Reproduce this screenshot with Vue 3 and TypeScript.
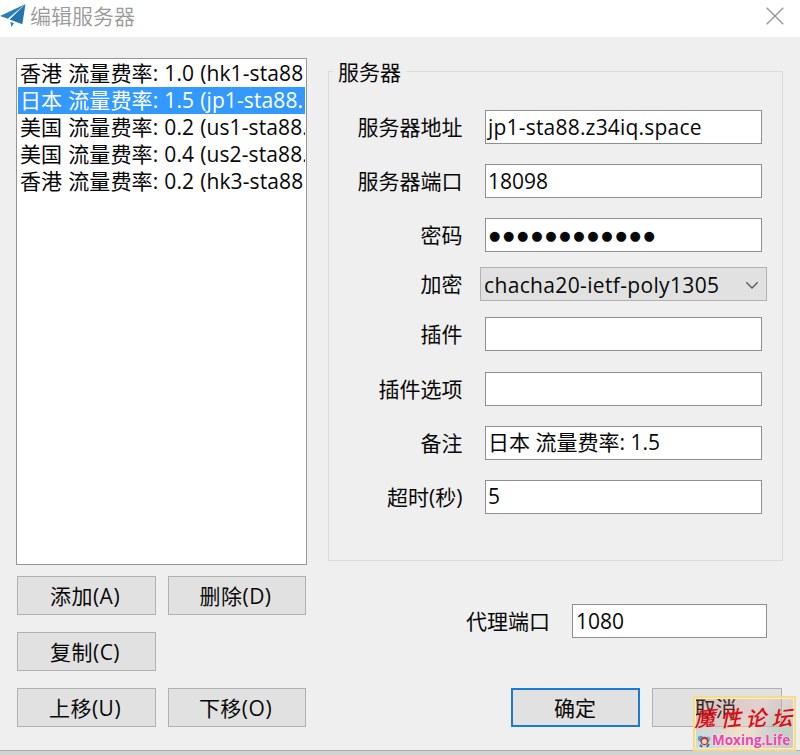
<script setup lang="ts">
import { ref } from 'vue'

interface Field {
  label: string
  value: string
  kind: 'text' | 'password' | 'select'
  tone?: string
}

const servers: string[] = [
  '香港 流量费率: 1.0 (hk1-sta88',
  '日本 流量费率: 1.5 (jp1-sta88.',
  '美国 流量费率: 0.2 (us1-sta88.',
  '美国 流量费率: 0.4 (us2-sta88.',
  '香港 流量费率: 0.2 (hk3-sta88',
]
const selected = ref(1)

const fields: Field[] = [
  { label: '服务器地址', value: 'jp1-sta88.z34iq.space', kind: 'text', tone: 'host' },
  { label: '服务器端口', value: '18098', kind: 'text' },
  { label: '密码', value: '●●●●●●●●●●●●', kind: 'password' },
  { label: '加密', value: 'chacha20-ietf-poly1305', kind: 'select' },
  { label: '插件', value: '', kind: 'text' },
  { label: '插件选项', value: '', kind: 'text' },
  { label: '备注', value: '日本 流量费率: 1.5', kind: 'text', tone: 'remark' },
  { label: '超时(秒)', value: '5', kind: 'text' },
]
</script>

<template>
  <div class="window">
    <header class="titlebar">
      <svg class="plane" width="27" height="28" viewBox="0 0 27 28">
        <path d="M0 16 L25.5 4 L7.8 18.7 Z" fill="#2b80b9" />
        <path d="M25.5 4 L22.3 24.3 L9.6 19.6 Z" fill="#2474ad" />
        <path d="M10.4 21.8 L14 23.3 L11.3 27 Z" fill="#2b80b9" />
      </svg>
      <h1 class="title">编辑服务器</h1>
      <svg class="close" width="20" height="20" viewBox="0 0 20 20">
        <path d="M1.7 1.7 L18.3 18.3 M18.3 1.7 L1.7 18.3" fill="none" stroke="#999" stroke-width="1.4" />
      </svg>
    </header>

    <main class="content">
      <section class="left">
        <ul class="list">
          <li
            v-for="(server, i) in servers"
            :key="i"
            :class="{ active: i === selected }"
            @click="selected = i"
          >{{ server }}</li>
        </ul>
        <div class="actions">
          <button class="btn">添加(A)</button>
          <button class="btn">删除(D)</button>
          <button class="btn">复制(C)</button>
          <span></span>
          <button class="btn">上移(U)</button>
          <button class="btn">下移(O)</button>
        </div>
      </section>

      <section class="right">
        <fieldset class="group">
          <legend>服务器</legend>
          <div v-for="f in fields" :key="f.label" class="row" :class="'row-' + f.kind">
            <span class="label">{{ f.label }}</span>
            <div class="box" :class="[f.kind, f.tone]">
              <span class="value">{{ f.value }}</span>
              <svg v-if="f.kind === 'select'" width="14" height="9" viewBox="0 0 14 9">
                <path d="M1.3 1.3 L7 7 L12.7 1.3" fill="none" stroke="#555" stroke-width="1.3" />
              </svg>
            </div>
          </div>
        </fieldset>
        <div class="proxy">
          <span class="label">代理端口</span>
          <div class="box">1080</div>
        </div>
        <div class="confirm">
          <button class="btn primary">确定</button>
          <button class="btn">取消</button>
        </div>
      </section>
    </main>

    <div class="mark">
      <div class="mark-cn"><span>魔</span><span>性</span><span>论</span><span>坛</span></div>
      <div class="mark-en">
        <svg width="14" height="14" viewBox="0 0 14 14">
          <circle cx="3.6" cy="4.6" r="2.8" fill="#4ba3ce" />
          <circle cx="11" cy="5" r="2.5" fill="#65bede" />
          <circle cx="7.5" cy="7" r="4.2" fill="#c7323c" />
          <circle cx="7.4" cy="7.6" r="2.5" fill="#f5d5c9" />
          <path d="M3 11 L5 13 M12 10 L10 13" stroke="#276c9e" stroke-width="1.8" />
        </svg>
        <span>Moxing.Life</span>
      </div>
    </div>
  </div>
</template>

<style>
body {
  margin: 0;
  background: #d2d2d2;
  overflow: hidden;
}
</style>

<style scoped>
.window {
  position: relative;
  box-sizing: border-box;
  width: 800px;
  height: 751px;
  background: #efefef;
  border-bottom: 1px solid #aaa;
  box-shadow: 0 1px 3px #aaa;
  font-family: 'Open Sans', 'Noto Sans CJK SC', sans-serif;
  font-size: 21px;
  line-height: 27px;
  color: #080808;
}
.titlebar {
  display: flex;
  align-items: flex-start;
  height: 37px;
  background: #fff;
}
.plane { flex: none; }
.title {
  margin: 3px auto 0 3px;
  font-size: 21px;
  font-weight: 350;
  line-height: 27px;
  color: #999;
}
.close { margin: 6px 15px 0 0; }
.content {
  display: flex;
  gap: 21px;
  padding: 21px 17px 0 16px;
}
.left { width: 291px; }
.list {
  box-sizing: border-box;
  height: 507px;
  margin: 0;
  padding: 1px;
  list-style: none;
  background: #fff;
  border: 1px solid #969696;
}
.list li {
  height: 27px;
  padding-left: 2px;
  line-height: 27.5px;
  letter-spacing: 0.1px;
  word-spacing: 0.5px;
  white-space: nowrap;
  overflow: hidden;
}
.list li.active {
  background: #3399ff;
  color: #fff;
}
.actions {
  display: grid;
  grid-template-columns: 139px 138px;
  grid-auto-rows: 39px;
  gap: 17px 12px;
  padding: 11px 0 0 1px;
}
.btn {
  box-sizing: border-box;
  height: 39px;
  padding: 0 3px 0 0;
  border: 1px solid #b1b1b1;
  background: #e1e1e1;
  font: inherit;
  line-height: 36px;
  color: inherit;
}
.actions .btn { letter-spacing: 0.5px; }
.right { width: 455px; }
.group {
  box-sizing: border-box;
  width: 455px;
  height: 503px;
  margin: 0;
  padding: 25px 20px 0 10px;
  border: 1px solid #dcdcdc;
}
.group legend {
  height: 27px;
  margin-left: -6px;
  padding: 0 5px;
  line-height: 29px;
}
.row {
  display: flex;
  justify-content: flex-end;
  height: 34px;
  margin-bottom: 20.2px;
}
.row .label {
  margin-right: 22.5px;
  line-height: 34px;
}
.box {
  box-sizing: border-box;
  display: flex;
  align-items: center;
  width: 277px;
  height: 34px;
  padding: 0 2px;
  border: 1px solid #8f8f8f;
  background: #fff;
  white-space: pre;
}
.box.host { letter-spacing: 0.2px; }
.row-password { margin-bottom: 15px; }
.box.password .value {
  font-family: 'DejaVu Sans', sans-serif;
  font-size: 13px;
  letter-spacing: 2.7px;
  padding-left: 1px;
}
.row-select { margin: 0 -5px 16px 0; }
.row-select .label { margin-right: 17.5px; }
.box.select {
  width: 287px;
  justify-content: space-between;
  padding: 2px 7px 0 3px;
  border-color: #b1b1b1;
  background: #e1e1e1;
  letter-spacing: 0.35px;
}
.proxy {
  display: flex;
  justify-content: flex-end;
  margin: 43px 16px 0 0;
}
.proxy .label {
  margin-right: 22px;
  line-height: 34px;
}
.proxy .box { width: 195px; padding-left: 3px; }
.confirm {
  display: flex;
  justify-content: flex-end;
  gap: 12px;
  margin: 50px 1px 0 0;
}
.confirm .btn { width: 130px; }
.confirm .primary {
  width: 129px;
  padding-right: 1px;
  border: 2px solid #1a7cce;
  line-height: 34px;
}
.mark {
  position: absolute;
  left: 693px;
  top: 696px;
  box-sizing: border-box;
  width: 103px;
  height: 55px;
  border: 2px solid #f5dc8d;
  outline: 1px solid #fff0b8;
  outline-offset: -3px;
  background:
    radial-gradient(circle at 8% 90%, #afe6e7aa, transparent 30%),
    radial-gradient(circle at 45% 75%, #f4eac088, transparent 35%),
    radial-gradient(circle at 90% 75%, #a8c9bb88, transparent 40%),
    linear-gradient(110deg, #b0706044, #e5a59d44 60%, #a0909055);
}
.mark-cn {
  display: grid;
  grid-template-columns: repeat(4, 25.7px);
  height: 34px;
  padding: 8px 0 0 1px;
  box-sizing: border-box;
  font-family: 'Noto Sans CJK SC', sans-serif;
  font-size: 21px;
  font-weight: 500;
  line-height: 22px;
  color: #e00b12;
}
.mark-cn span {
  width: 21px;
  transform: skew(-12deg, -6deg);
}
.mark-en {
  display: flex;
  align-items: center;
  height: 17px;
  padding-left: 2px;
  font-size: 13.5px;
  font-weight: 700;
  line-height: 17px;
  color: #ed45a8;
  text-shadow: 0 0 2px #fff;
}
.mark-en span { margin-left: 1px; }
</style>
